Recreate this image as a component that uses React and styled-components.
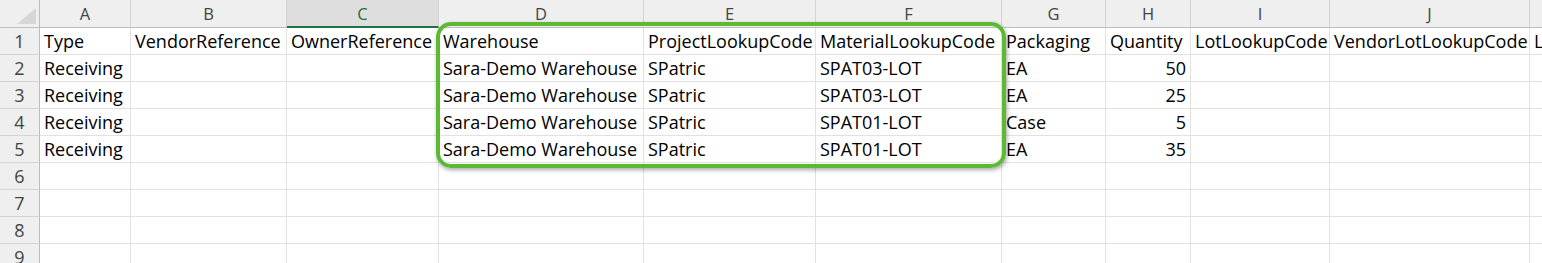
import { Fragment } from "react";
import styled, { createGlobalStyle } from "styled-components";

const GlobalStyle = createGlobalStyle`
  html, body {
    margin: 0;
    padding: 0;
    background: #ffffff;
    overflow: hidden;
  }
`;

const columns = [
  { key: "A", width: 91 },
  { key: "B", width: 156 },
  { key: "C", width: 152, selected: true },
  { key: "D", width: 205 },
  { key: "E", width: 172 },
  { key: "F", width: 186 },
  { key: "G", width: 104 },
  { key: "H", width: 85, numeric: true },
  { key: "I", width: 139 },
  { key: "J", width: 200 },
  { key: "K", width: 200 },
];

const rows = [
  ["Type", "VendorReference", "OwnerReference", "Warehouse", "ProjectLookupCode", "MaterialLookupCode", "Packaging", "Quantity", "LotLookupCode", "VendorLotLookupCode", "LotExpirationDate"],
  ["Receiving", "", "", "Sara-Demo Warehouse", "SPatric", "SPAT03-LOT", "EA", "50", "", "", ""],
  ["Receiving", "", "", "Sara-Demo Warehouse", "SPatric", "SPAT03-LOT", "EA", "25", "", "", ""],
  ["Receiving", "", "", "Sara-Demo Warehouse", "SPatric", "SPAT01-LOT", "Case", "5", "", "", ""],
  ["Receiving", "", "", "Sara-Demo Warehouse", "SPatric", "SPAT01-LOT", "EA", "35", "", "", ""],
  [], [], [], [],
];

const Sheet = styled.div`
  position: relative;
  width: 1542px;
  height: 263px;
  overflow: hidden;
  font-family: "Open Sans", "Liberation Sans", sans-serif;
`;

const Grid = styled.div`
  display: grid;
  grid-template-columns: 40px ${columns.map((c) => `${c.width}px`).join(" ")};
  grid-template-rows: 28px repeat(${rows.length}, 27px);
`;

const Corner = styled.div`
  box-sizing: border-box;
  background: #efefef;
  border-right: 1px solid #bdbdbd;
  border-bottom: 1px solid #bdbdbd;
  display: flex;
  justify-content: flex-end;
  align-items: flex-end;
  padding: 0 3px 3px 0;
`;

const Triangle = styled.div`
  width: 19px;
  height: 16px;
  background: #d6d6d6;
  clip-path: polygon(100% 0, 100% 100%, 0 100%);
`;

const ColHeader = styled.div`
  box-sizing: border-box;
  background: ${(p) => (p.$selected ? "#dedede" : "#efefef")};
  border-right: 1px solid #d4d4d4;
  border-bottom: ${(p) => (p.$selected ? "2px solid #217346" : "1px solid #bdbdbd")};
  color: ${(p) => (p.$selected ? "#1f6b42" : "#444444")};
  font-size: 16.5px;
  line-height: 26px;
  padding-top: 1px;
  text-align: center;
`;

const RowHeader = styled.div`
  box-sizing: border-box;
  background: #efefef;
  border-right: 1px solid #bdbdbd;
  border-bottom: 1px solid #d4d4d4;
  color: #444444;
  font-size: 18px;
  line-height: 26px;
  text-align: center;
`;

const Cell = styled.div`
  box-sizing: border-box;
  border-right: 1px solid #e1e1e1;
  border-bottom: 1px solid #e1e1e1;
  color: #000000;
  font-size: 18px;
  line-height: 26px;
  padding: 0 4px;
  white-space: nowrap;
  overflow: ${(p) => (p.$spill ? "visible" : "hidden")};
  text-align: ${(p) => (p.$numeric ? "right" : "left")};
`;

const Highlight = styled.div`
  position: absolute;
  left: 436px;
  top: 22px;
  width: 570px;
  height: 146px;
  box-sizing: border-box;
  border: 4px solid #5cb932;
  border-radius: 15px;
  box-shadow: 1px 2px 4px rgba(0, 0, 0, 0.35);
  pointer-events: none;
`;

const App = () => {
  return (
    <>
      <GlobalStyle />
      <Sheet>
        <Grid>
          <Corner>
            <Triangle />
          </Corner>
          {columns.map((c) => (
            <ColHeader key={c.key} $selected={c.selected}>
              {c.key}
            </ColHeader>
          ))}
          {rows.map((row, r) => (
            <Fragment key={r}>
              <RowHeader>{r + 1}</RowHeader>
              {columns.map((c, i) => (
                <Cell key={c.key} $numeric={c.numeric && r > 0} $spill={c.key === "K"}>
                  {row[i] || ""}
                </Cell>
              ))}
            </Fragment>
          ))}
        </Grid>
        <Highlight />
      </Sheet>
    </>
  );
};

export default App;
